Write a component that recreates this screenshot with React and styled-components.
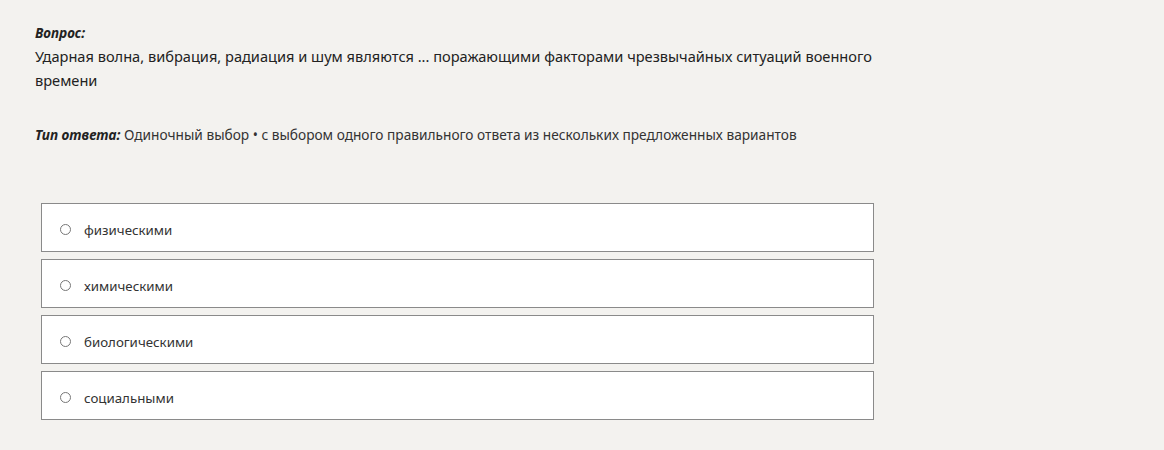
import React from 'react'
import styled, { createGlobalStyle } from 'styled-components'

const GlobalStyle = createGlobalStyle`
  html, body {
    margin: 0;
    padding: 0;
    background: #f3f2ef;
  }
  body {
    font-family: "Noto Sans", "Open Sans", sans-serif;
    color: #222;
  }
`

const Page = styled('div')`
  padding: 24px 0 0 35px;
  width: 1164px;
  height: 450px;
  box-sizing: border-box;
`

const Label = styled('div')`
  font-size: 13.5px;
  font-weight: bold;
  font-style: italic;
  line-height: 18px;
  color: #222;
`

const QuestionText = styled('div')`
  margin-top: 2px;
  font-size: 14.6px;
  line-height: 24px;
  width: 850px;
  color: #222;
`

const AnswerType = styled('div')`
  margin-top: 34px;
  font-size: 13.7px;
  line-height: 18px;
  color: #333;
  b {
    font-style: italic;
    color: #222;
  }
`

const Options = styled('div')`
  margin-top: 59px;
  margin-left: 6px;
  width: 833px;
  display: flex;
  flex-direction: column;
  gap: 7px;
`

const Option = styled('label')`
  display: flex;
  align-items: center;
  height: 49px;
  box-sizing: border-box;
  padding: 4px 0 0 18px;
  background: #fff;
  border: 1px solid #8a8a8a;
  font-size: 13.3px;
  color: #333;
  cursor: pointer;
`

const Radio = styled('span')`
  width: 9px;
  height: 9px;
  border: 1px solid #777;
  border-radius: 50%;
  margin-right: 13px;
  margin-top: -1px;
  flex-shrink: 0;
`

const options = ['физическими', 'химическими', 'биологическими', 'социальными']

const App = () => {
  return (
    <>
      <GlobalStyle />
      <Page>
        <Label>Вопрос:</Label>
        <QuestionText>
          Ударная волна, вибрация, радиация и шум являются ... поражающими факторами чрезвычайных ситуаций военного времени
        </QuestionText>
        <AnswerType>
          <b>Тип ответа:</b> Одиночный выбор • с выбором одного правильного ответа из нескольких предложенных вариантов
        </AnswerType>
        <Options>
          {options.map(o => (
            <Option key={o}>
              <Radio />
              {o}
            </Option>
          ))}
        </Options>
      </Page>
    </>
  )
}

export default App
